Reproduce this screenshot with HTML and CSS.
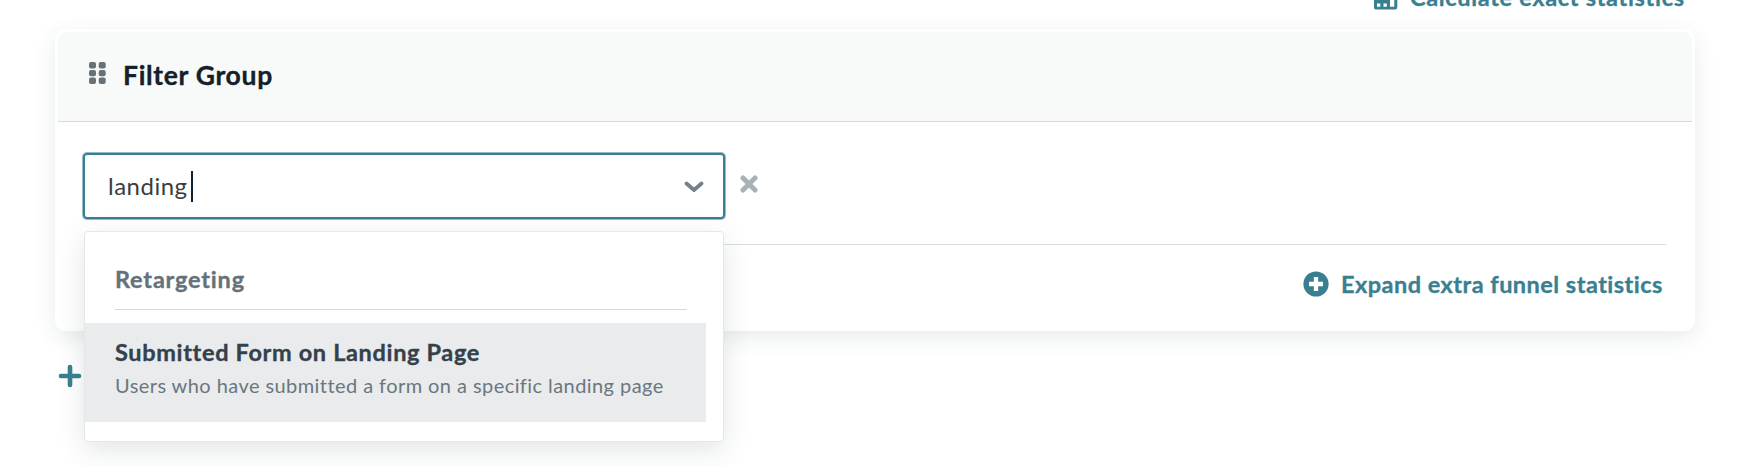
FILE: index.html
```html
<!DOCTYPE html>
<html lang="en">
<head>
<meta charset="utf-8">
<title>Filter Group</title>
<link rel="stylesheet" href="styles.css">
</head>
<body>
<main class="page">
  <div class="toolbar">
    <a class="link calc">
      <svg class="calc-icon" width="24" height="26" viewBox="0 0 24 26"><path fill="#3a7f91" fill-rule="evenodd" d="M3 0H21Q23.300 0 23.300 3V23Q23.300 25.600 21 25.600H2.500Q0 25.600 0 23V3Q0 0 3 0ZM3.300 3.500V13H20V3.500ZM3 19.500V22.800H6.300V19.500ZM9.500 19.500V22.800H12.800V19.500ZM16 15.500V22.800H20.300V15.500Z"/></svg>
      <span class="calc-label">Calculate exact statistics</span>
    </a>
  </div>
  <section class="card">
    <header class="card-head">
      <svg class="grip" width="17" height="22" viewBox="0 0 17 22" fill="#65727a"><rect width="7" height="6.500" rx="2"/><rect x="9.700" width="7" height="6.500" rx="2"/><rect y="7.900" width="7" height="6.300" rx="2"/><rect x="9.700" y="7.900" width="7" height="6.300" rx="2"/><rect y="15.600" width="7" height="6.400" rx="2"/><rect x="9.700" y="15.600" width="7" height="6.400" rx="2"/></svg>
      <h2 class="title">Filter Group</h2>
    </header>
    <div class="card-body">
      <div class="row">
        <div class="select">
          <div class="control">
            <span class="query">landing</span><span class="caret"></span>
            <svg class="chevron" width="20" height="12" viewBox="0 0 20 12"><path d="M2.500 2.500 10 9 17.500 2.500" fill="none" stroke="#73818a" stroke-width="3.800" stroke-linecap="round" stroke-linejoin="round"/></svg>
          </div>
          <div class="menu">
            <div class="group">Retargeting</div>
            <div class="option">
              <div class="option-name">Submitted Form on Landing Page</div>
              <div class="option-note">Users who have submitted a form on a specific landing page</div>
            </div>
          </div>
        </div>
        <svg class="remove" width="18" height="18" viewBox="0 0 18 18"><path d="M3 3 15 15M15 3 3 15" stroke="#a7b1b6" stroke-width="5" stroke-linecap="round"/></svg>
      </div>
      <div class="card-foot">
        <a class="link expand">
          <svg width="26" height="26" viewBox="0 0 26 26"><circle cx="13" cy="13" r="12.600" fill="#3a7f91"/><path d="M13 6V20M6 13H20" stroke="#fff" stroke-width="4.300"/></svg>
          <span class="expand-label">Expand extra funnel statistics</span>
        </a>
      </div>
    </div>
  </section>
  <svg class="add" width="24" height="24" viewBox="0 0 24 24"><path d="M12 3V21M3 12H21" stroke="#3a7f91" stroke-width="4.600" stroke-linecap="round"/></svg>
</main>
</body>
</html>
```
FILE: styles.css
```css
* { box-sizing: border-box; }
body { margin: 0; background: #fff; font-family: Lato, "Liberation Sans", sans-serif; }
svg { display: block; flex: none; }
.page { height: 466px; padding: 0 59px 0 55px; overflow: hidden; }
.toolbar { height: 29px; display: flex; justify-content: flex-end; padding-right: 10px; }
.link { display: flex; color: #3a7f91; font-weight: 700; font-size: 23.5px; line-height: 28px; white-space: nowrap; }
.link, .title, .group, .option-name { -webkit-text-stroke: 0.35px currentColor; }
.calc { margin-top: -16px; width: 311px; gap: 12px; }
.calc-label { margin-top: -1px; letter-spacing: 0.68px; }
.card { height: 302px; border: 3px solid #fff; border-radius: 10px; background: #fff; box-shadow: 0 6px 22px rgba(30, 60, 55, 0.1); }
.card-head { height: 90px; display: flex; align-items: flex-start; gap: 17px; padding: 30px 31px 0; background: #f8faf9; border-bottom: 1px solid #d6dadb; border-radius: 9px 9px 0 0; }
.title { margin: -3px 0 0; font-size: 26.5px; line-height: 32px; font-weight: 700; color: #14202a; letter-spacing: 0.68px; white-space: nowrap; }
.card-body { padding: 31px 26px 0 25px; }
.row { display: flex; gap: 15px; height: 92px; margin-left: 4px; border-bottom: 1px solid #d8dcdd; }
.select { position: relative; width: 642px; height: 66px; margin-left: -4px; }
.control { height: 66px; display: flex; align-items: center; padding: 0 19px 0 23px; border: 2px solid #3a7f91; border-radius: 4px; box-shadow: 0 0 0 1px rgba(58, 127, 145, 0.55); }
.query { color: #3c3d40; font-size: 24px; line-height: 32px; letter-spacing: 0.5px; }
.caret { width: 2px; height: 31px; margin-left: 3px; background: #14202a; }
.chevron { margin: 2px 0 0 auto; }
.remove { margin-top: 22px; }
.menu { position: absolute; top: 78px; left: 1px; z-index: 2; width: 640px; height: 211px; padding-top: 26px; background: #fff; border: 1px solid #e5e8e9; border-radius: 4px; box-shadow: 0 8px 28px rgba(30, 60, 55, 0.13); white-space: nowrap; }
.group { width: 572px; height: 52px; margin: 0 0 13px 30px; padding-top: 7px; border-bottom: 1px solid #d5d8da; color: #65727a; font-size: 23.5px; font-weight: 700; line-height: 28px; letter-spacing: 0.8px; }
.option { width: 621px; height: 99px; padding: 15px 30px 0; background: #e9ebec; }
.option-name { color: #34414b; font-size: 23.5px; font-weight: 700; line-height: 28px; letter-spacing: 0.66px; }
.option-note { margin-top: 5px; color: #6a7780; font-size: 20px; line-height: 28px; letter-spacing: 0.43px; }
.card-foot { display: flex; justify-content: flex-end; padding-top: 26px; }
.expand { width: 363px; gap: 12px; }
.expand-label { margin-top: -1px; letter-spacing: 0.48px; }
.add { margin: 33px 0 0 3px; }
```
